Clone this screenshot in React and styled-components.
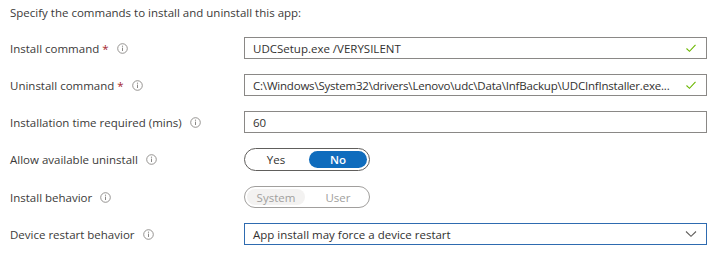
import React from "react";
import styled, { createGlobalStyle } from "styled-components";

const GlobalStyle = createGlobalStyle`
  body {
    margin: 0;
    background: #ffffff;
    font-family: "Open Sans", "Noto Sans", sans-serif;
    color: #323130;
  }
`;

const Page = styled.div`
  width: 718px;
  height: 255px;
  box-sizing: border-box;
  padding: 5px 11px 0 10px;
  font-size: 11.5px;
`;

const Intro = styled.div`
  line-height: 16px;
  margin-bottom: 16px;
  color: #3b3a39;
`;

const Form = styled.div`
  display: grid;
  grid-template-columns: 234px minmax(0, 1fr);
  row-gap: 15px;
  align-items: center;
`;

const Label = styled.div`
  display: flex;
  align-items: center;
  gap: 8px;
  color: #3b3a39;
  white-space: nowrap;
`;

const Required = styled.span`
  color: #a4262c;
  margin-left: 3px;
`;

const Field = styled.div`
  display: flex;
  align-items: center;
  gap: 4px;
  height: 22px;
  box-sizing: border-box;
  border: 1px solid ${(p) => (p.$focus ? "#2e6bb0" : "#8a8886")};
  padding: 0 9px 0 8px;
  background: #fff;
  color: #323130;
`;

const FieldText = styled.span`
  flex: 1;
  min-width: 0;
  white-space: nowrap;
  letter-spacing: ${(p) => (p.$tight ? "-0.2px" : "0")};
`;

const Toggle = styled.div`
  display: flex;
  width: 126px;
  height: ${(p) => p.$h || 23}px;
  box-sizing: border-box;
  border: 1px solid ${(p) => (p.$disabled ? "#a19f9d" : "#605e5c")};
  border-radius: 12px;
  padding: 2px;
  gap: 4px;
`;

const Segment = styled.div`
  flex: 1;
  display: flex;
  align-items: center;
  justify-content: center;
  border-radius: 10px;
  background: ${(p) => (p.$on ? (p.$disabled ? "#f3f2f1" : "#0f6cbd") : "transparent")};
  color: ${(p) => (p.$disabled ? "#a19f9d" : p.$on ? "#ffffff" : "#323130")};
  font-weight: ${(p) => (p.$on && !p.$disabled ? 600 : 400)};
`;

const InfoIcon = () => (
  <svg width="11" height="11" viewBox="0 0 11 11">
    <circle cx="5.5" cy="5.5" r="4.8" fill="none" stroke="#8a8886" strokeWidth="0.9" />
    <line x1="5.5" y1="4.6" x2="5.5" y2="8" stroke="#8a8886" strokeWidth="1" />
    <circle cx="5.5" cy="3.2" r="0.6" fill="#8a8886" />
  </svg>
);

const Check = () => (
  <svg width="12" height="10" viewBox="0 0 12 10">
    <path d="M1.5 5.5 L4.5 8.3 L10.5 1.8" fill="none" stroke="#6bb700" strokeWidth="1.1" />
  </svg>
);

const Chevron = () => (
  <svg width="12" height="8" viewBox="0 0 12 8">
    <path d="M1 1.5 L6 6.3 L11 1.5" fill="none" stroke="#605e5c" strokeWidth="1.1" />
  </svg>
);

const Row = ({ label, required, children }) => (
  <>
    <Label>
      <span>
        {label}
        {required && <Required>*</Required>}
      </span>
      <InfoIcon />
    </Label>
    <div>{children}</div>
  </>
);

export default function App() {
  return (
    <Page>
      <GlobalStyle />
      <Intro>Specify the commands to install and uninstall this app:</Intro>
      <Form>
        <Row label="Install command" required>
          <Field>
            <FieldText>UDCSetup.exe /VERYSILENT</FieldText>
            <Check />
          </Field>
        </Row>
        <Row label="Uninstall command" required>
          <Field>
            <FieldText $tight>
              C:\Windows\System32\drivers\Lenovo\udc\Data\InfBackup\UDCInfInstaller.exe...
            </FieldText>
            <Check />
          </Field>
        </Row>
        <Row label="Installation time required (mins)">
          <Field>
            <FieldText>60</FieldText>
          </Field>
        </Row>
        <Row label="Allow available uninstall">
          <Toggle>
            <Segment>Yes</Segment>
            <Segment $on>No</Segment>
          </Toggle>
        </Row>
        <Row label="Install behavior">
          <Toggle $disabled $h={22}>
            <Segment $on $disabled>System</Segment>
            <Segment $disabled>User</Segment>
          </Toggle>
        </Row>
        <Row label="Device restart behavior">
          <Field $focus>
            <FieldText>App install may force a device restart</FieldText>
            <Chevron />
          </Field>
        </Row>
      </Form>
    </Page>
  );
}
